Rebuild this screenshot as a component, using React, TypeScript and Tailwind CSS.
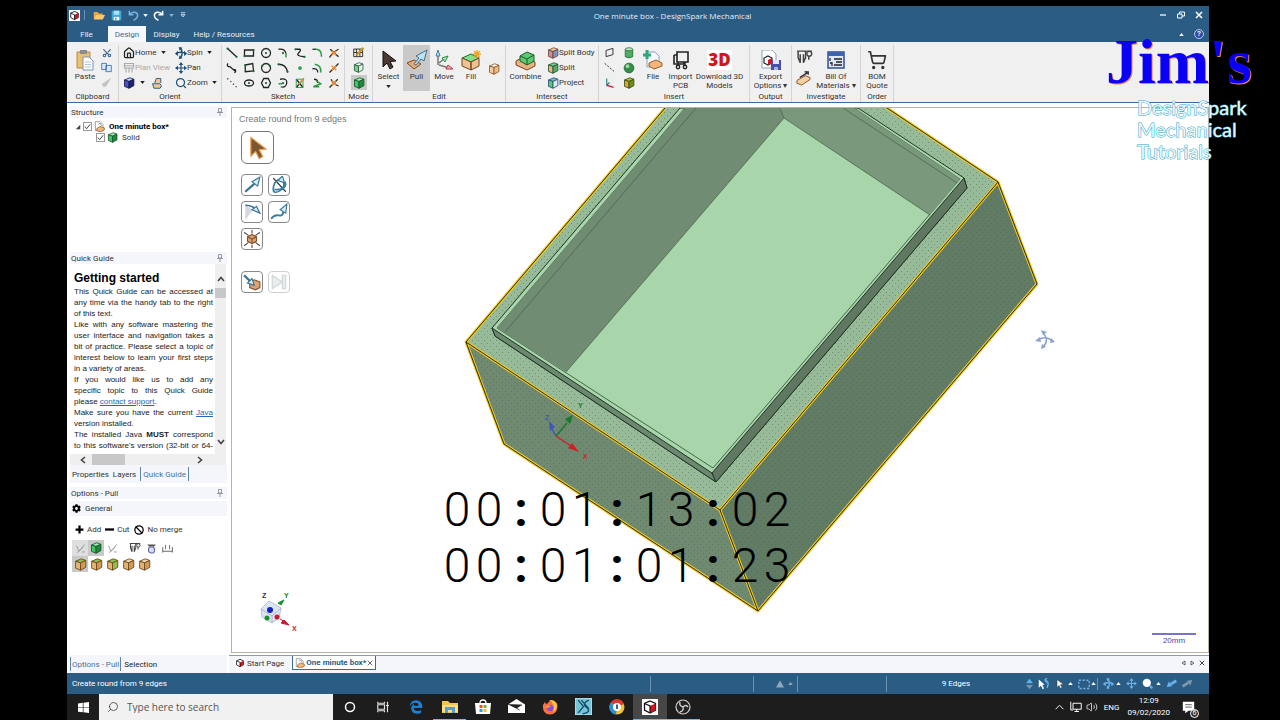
import type { ReactNode } from "react";
import { Search, ShoppingCart, Home, Scissors, Volume2, Ban } from "lucide-react";
import { FaCog, FaEdgeLegacy } from "react-icons/fa";

type IconProps = { w?: number; h?: number; box?: string; children: ReactNode };

function Icon({ w = 12, h, box = "0 0 16 16", children }: IconProps) {
  return (
    <svg width={w} height={h ?? w} viewBox={box} fill="none" className="block shrink-0" aria-hidden="true">
      {children}
    </svg>
  );
}

function Cube({ w = 12, top = "#a4efb0", left = "#45c463", right = "#1f8a3c", line = "#14532a" }) {
  return (
    <Icon w={w}>
      <g stroke={line} strokeWidth="1.1" strokeLinejoin="round">
        <path d="M9 1 14.500 3 8 6 2 4Z" fill={top} />
        <path d="M2 4 8 6V15L2 12.500Z" fill={left} />
        <path d="M14.500 3V11.500L8 15V6Z" fill={right} />
      </g>
    </Icon>
  );
}

function AppLogo({ w = 11 }) {
  return (
    <Icon w={w}>
      <rect width="16" height="16" fill="#fff" />
      <path d="M8 2 13.5 4.5V11L8 14 2.5 11V4.5Z" fill="#fff" stroke="#111" strokeWidth="1.3" />
      <path d="M8 7 13.5 4.5V11L8 14Z" fill="#d3141c" />
      <path d="M2.5 4.5 8 7V14" stroke="#111" strokeWidth="1.2" />
    </Icon>
  );
}

function Caret({ up = false, className = "text-[#222]" }) {
  return (
    <svg width="5" height="3" viewBox="0 0 6 4" className={`shrink-0 ${className}`} aria-hidden="true">
      <path d={up ? "M0 4 3 0 6 4Z" : "M0 0 3 4 6 0Z"} fill="currentColor" />
    </svg>
  );
}

function Pin() {
  return (
    <button aria-label="Pin panel" className="ml-auto mr-1">
      <Icon w={6} h={8} box="0 0 6 8">
        <path d="M1.5 .5h3v3.5h-3zM0 4.5h6M3 4.5V8" stroke="#8a90a0" strokeWidth=".9" />
      </Icon>
    </button>
  );
}

function Group({ label, className, children }: { label: string; className: string; children: ReactNode }) {
  return (
    <section className={`flex shrink-0 flex-col border-r border-[#d4d4d4] ${className}`}>
      <div className="flex h-[47px] items-start">{children}</div>
      <h2 className="text-center leading-[10px]">{label}</h2>
    </section>
  );
}

function BigButton({ label, active, caret, className = "", children }: { label: string; active?: boolean; caret?: boolean; className?: string; children: ReactNode }) {
  return (
    <button className={`flex h-[46px] shrink-0 flex-col items-center pt-[3px] ${active ? "bg-[#c9c9c9]" : ""} ${className}`}>
      <span className="flex h-6 items-center">{children}</span>
      <span className="whitespace-pre-line leading-[9px]">{label}</span>
      {caret && <span className="pt-1"><Caret /></span>}
    </button>
  );
}

function SmallButton({ label, caret, muted, children }: { label: string; caret?: boolean; muted?: boolean; children: ReactNode }) {
  return (
    <button className={`flex h-[15px] items-center whitespace-nowrap ${muted ? "text-[#aaa]" : ""}`}>
      {children}
      {label}
      {caret && <span className="pl-1"><Caret /></span>}
    </button>
  );
}

const sketchTools: { name: string; d: string; dots?: [number, number][]; accent?: string }[] = [
  { name: "Line", d: "M2 2 14 13", dots: [[2, 2], [14, 13]] },
  { name: "Rectangle", d: "M2 4H14V12H2Z", dots: [[2, 12], [14, 4]] },
  { name: "Circle", d: "M8 2a6 6 0 1 0 .1 0", dots: [[8, 8]] },
  { name: "Tangent arc", d: "M2 3Q11 2 12 9", dots: [[8, 8]], accent: "M12 9V14" },
  { name: "Spline", d: "M2 3H8Q10 4 6 8T14 13", dots: [[2, 3], [14, 13]] },
  { name: "Rounded corner", d: "M2 3H7", accent: "M7 3Q14 3 14 13" },
  { name: "Trim away", d: "M2 14Q6 7 14 3M3 3 14 13", accent: "M6 8H10" },
  { name: "Tangent line", d: "M3 2a2 2 0 1 0 2 4L12 12M11 10a2 2 0 1 1 0 4" },
  { name: "Three-point rectangle", d: "M3 4 13 2 14 12 3 13Z", dots: [[3, 4], [14, 12]] },
  { name: "Three-point circle", d: "M8 2a6 6 0 1 0 .1 0", dots: [[3, 5], [13, 5]] },
  { name: "Three-point arc", d: "M2 3Q12 3 14 13", dots: [[2, 3], [14, 13]] },
  { name: "Point", d: "M8 8h.1", accent: "M6.500 8a1.500 1.500 0 1 0 3 0a1.500 1.500 0 1 0-3 0" },
  { name: "Offset curve", d: "M2 9Q9 8 9 14", accent: "M5 3Q14 4 13 14" },
  { name: "Split curve", d: "M2 14 14 2", dots: [[8, 8]] },
  { name: "Construction line", d: "M2 2l1 1M6 5.500l1 1M9.500 9l1 1M13 12.500l1 1" },
  { name: "Ellipse", d: "M2 8a6 4 0 1 0 12 0a6 4 0 1 0-12 0", dots: [[8, 8]] },
  { name: "Polygon", d: "M5 2h6l3 6-3 6H5L2 8Z", dots: [[8, 8]] },
  { name: "Sweep arc", d: "M4 3Q14 1 13 8T5 13", dots: [[8, 8]], accent: "M2 9H7" },
  { name: "Face curve", d: "M3 14 13 2M3 3 12 14", accent: "M3 3H12V14H3Z" },
  { name: "Project to sketch", d: "M4 3Q9 3 9 8", accent: "M3 13 13 9 7 5M3 13h8" },
  { name: "Bend", d: "M2 14 13 3M4 3Q7 9 14 12" },
];

function SketchGrid() {
  return (
    <div className="grid grid-cols-7 pl-px">
      {sketchTools.map((tool, i) => (
        <button key={tool.name} aria-label={tool.name} className="flex h-[15px] w-[17px] items-center justify-center">
          <Icon w={12}>
            <path d={tool.d} stroke={i % 7 === 6 ? "#30231a" : "#222"} strokeWidth="1.700" />
            {tool.accent && <path d={tool.accent} stroke={i === 6 ? "#e06a1c" : "#2b9a45"} strokeWidth={i === 18 ? 1.2 : 2} />}
            {tool.dots?.map(([x, y]) => <circle key={`${x}-${y}`} cx={x} cy={y} r="1.500" fill="#176c32" />)}
            {i % 7 === 6 && <path d="M5 5 11 11M11 5 5 11" stroke="#f08a2a" strokeWidth="1.800" />}
            {i === 18 && <path d="M13 2 6 10" stroke="#d1a33a" strokeWidth="2" />}
          </Icon>
        </button>
      ))}
    </div>
  );
}

function SpinGlyph({ w = 12, color = "#1f5077" }) {
  return (
    <Icon w={w}>
      <path d="M1 9Q8 5 15 9M7 1Q12 8 7 15" stroke={color} strokeWidth="2" />
      <path d="M0 9 4 5V12ZM16 9 12 5V12ZM5 0 10 1 6 5ZM5 16 10 15 6 11Z" fill={color} />
    </Icon>
  );
}

function PanGlyph({ w = 12, color = "#1f5077" }) {
  return (
    <Icon w={w}>
      <path d="M8 2V14M2 8H14" stroke={color} strokeWidth="1.600" />
      <path d="M8 0 11 4H5ZM8 16 5 12H11ZM0 8 4 5V11ZM16 8 12 11V5Z" fill={color} />
    </Icon>
  );
}

function Page({ w = 11 }) {
  return (
    <Icon w={w}>
      <path d="M2 1H9L13 5V14H2Z" fill="#fff" stroke="#777" />
      <path d="M4 11 9 8 15 10V13L9 16 4 14Z" fill="#efb77e" stroke="#8a5220" />
      <path d="M6 5 9 3 11 7" stroke="#777" />
    </Icon>
  );
}

function Caliper({ w = 13 }) {
  return (
    <Icon w={w}>
      <path d="M1 2H15M2 2V8L4 13V5M7 5V13L9 8V2" stroke="#444" strokeWidth="1.400" />
      <circle cx="12.500" cy="4.500" r="2.300" fill="#f0f0f0" stroke="#444" strokeWidth="1.300" />
      <path d="M12 7V10" stroke="#444" strokeWidth="1.400" />
    </Icon>
  );
}

function Arrow({ w = 20, fill = "#4b3a33", stroke = "#111" }) {
  return (
    <Icon w={w} h={w} box="0 0 20 20">
      <path d="M4 1 17 11 11 11.500 14 17 11 19 8 13 4 17Z" fill={fill} stroke={stroke} strokeLinejoin="round" />
    </Icon>
  );
}

function TitleBar() {
  return (
    <header className="bg-[#2b5c84] text-[#e4edf5]">
      <div className="flex h-[18px] items-center">
        <div className="flex items-center pl-[2px]">
          <AppLogo />
          <span className="mx-1 h-[10px] w-px bg-[#6d91b0]" />
          <button aria-label="Open" className="ml-1">
            <Icon><path d="M1 4H6L8 6H13V13H1Z" fill="#e7a63f" /><path d="M4 8H16L13 14H1Z" fill="#ffc86f" /></Icon>
          </button>
          <button aria-label="Save" className="ml-[6px]">
            <Icon w={11}><path d="M1 1H15V15H1Z" fill="#39a9dc" /><path d="M4 1H12V7H4Z" fill="#aee1f5" /><path d="M4 10H12V15H4Z" fill="#fff" /><path d="M6 11H8V15H6Z" fill="#39a9dc" /></Icon>
          </button>
          <button aria-label="Undo" className="ml-[6px] flex items-center gap-1">
            <Icon w={11}><path d="M2 1V7H8M2 7C7 1 14 3 14 8Q14 12 8 15" stroke="#75b5e8" strokeWidth="2.200" /></Icon>
            <Caret className="text-white" />
          </button>
          <button aria-label="Redo" className="ml-[5px] flex items-center gap-[5px]">
            <Icon w={11}><path d="M14 1V7H8M14 7C9 1 2 3 2 8Q2 12 8 15" stroke="#fff" strokeWidth="2.200" /></Icon>
            <Caret className="text-[#8fb0cb]" />
          </button>
          <button aria-label="Customise toolbar" className="ml-[6px]"><Icon w={6}><path d="M2 2H14M3 7H13L8 13Z" stroke="#fff" strokeWidth="2" /></Icon></button>
        </div>
        <h1 className="flex-1 text-center font-['Open_Sans',sans-serif] text-[8px]">One minute box - DesignSpark Mechanical</h1>
        <div className="flex items-center justify-end gap-[10px] pr-[6px]">
          <button aria-label="Minimize"><Icon w={8}><path d="M2 8H14" stroke="#fff" strokeWidth="2.500" /></Icon></button>
          <button aria-label="Restore"><Icon w={8}><path d="M1 6H10V14H1ZM5 6V2H15V10H10" stroke="#fff" strokeWidth="2" /></Icon></button>
          <button aria-label="Close"><Icon w={8}><path d="M2 2 14 14M14 2 2 14" stroke="#fff" strokeWidth="3" /></Icon></button>
        </div>
      </div>
      <nav className="flex h-[18px] items-stretch pt-[2px]">
        <button className="w-[41px] pr-[2px]">File</button>
        <button className="w-[38px] bg-[#f6f7fa] text-[#3d6c96]">Design</button>
        <button className="w-[41px]">Display</button>
        <button className="w-[74px]">Help / Resources</button>
        <div className="ml-auto flex items-center gap-[10px] pr-[5px]">
          <Caret up className="text-white" />
          <button aria-label="Help" className="flex size-[10px] items-center justify-center rounded-full border border-[#b8c6ee] bg-[#2e4da8] text-[8px] font-bold leading-none">?</button>
        </div>
      </nav>
    </header>
  );
}

function Ribbon() {
  return (
    <div className="flex h-[61px] overflow-hidden border-b border-[#3e6a9c] bg-[#f0f0f0] pt-[3px] text-[#333]">
      <Group label="Clipboard" className="w-[52px]">
        <BigButton label="Paste" className="ml-[5px] w-[26px]">
          <Icon w={18} h={22} box="0 0 18 22">
            <path d="M1 3H14V19H1Z" fill="#eac073" stroke="#b98a3d" />
            <path d="M4 1H11V5H4Z" fill="#8d8d8d" />
            <path d="M7 8H13L17 12V21H7Z" fill="#fff" stroke="#7995b8" />
            <path d="M9 13H15M9 15.500H15M9 18H15" stroke="#aec3dd" />
          </Icon>
        </BigButton>
        <div className="flex flex-col items-center pl-[3px]">
          <button aria-label="Cut" className="flex h-[15px] items-center"><Scissors size={10} strokeWidth={2.5} className="-rotate-90 text-[#2f5d96]" /></button>
          <button aria-label="Copy" className="flex h-[15px] items-center"><Icon w={11}><path d="M1 2H8V11H1ZM7 5H15V14H7Z" fill="#dce9f8" stroke="#4575ae" strokeWidth="1.300" /></Icon></button>
          <button aria-label="Format painter" className="flex h-[15px] items-center"><Icon w={11}><path d="M15 1 8 13 4 15 1 10Z" fill="#c4c4c4" /></Icon></button>
        </div>
      </Group>
      <Group label="Orient" className="w-[103px]">
        <div className="w-[51px] pl-1">
          <SmallButton label="Home" caret><Home size={12} strokeWidth={2.5} className="text-[#222]" /></SmallButton>
          <SmallButton label="Plan View" muted><Icon><path d="M1 5H15M2 2H14V8H2ZM4 8V14M8 8V14M12 8V14" stroke="#aaa" strokeWidth="1.500" /></Icon></SmallButton>
          <div className="flex h-[15px] items-center gap-[6px]">
            <button aria-label="View orientation" className="flex items-center gap-[5px]"><Cube w={12} top="#cfd4ff" left="#4650c8" right="#1d2370" line="#14184e" /><Caret /></button>
            <button aria-label="Rotate view"><Icon><path d="M2 9H12L14 12 12 15H4ZM5 8 7 2H13V8" fill="#f0c898" stroke="#2f5d86" strokeWidth="1.300" /></Icon></button>
          </div>
        </div>
        <div className="pl-[5px]">
          <SmallButton label="Spin" caret><SpinGlyph /></SmallButton>
          <SmallButton label="Pan"><PanGlyph /></SmallButton>
          <SmallButton label="Zoom" caret><Search size={12} strokeWidth={2.5} className="text-[#1f5077]" /></SmallButton>
        </div>
      </Group>
      <Group label="Sketch" className="w-[123px]"><SketchGrid /></Group>
      <Group label="Mode" className="w-[28px]">
        <div className="flex w-full flex-col items-center">
          <button aria-label="Sketch mode" className="flex h-[15px] items-center"><Icon w={11}><path d="M1 3H14V14H1ZM5 3V14M10 3V14M1 8H14" stroke="#333" strokeWidth="1.400" /><path d="M15 1 5 12" stroke="#c99a1c" strokeWidth="3" /></Icon></button>
          <button aria-label="Section mode" className="flex h-[15px] items-center"><Cube w={11} top="#fff" left="#7ec98b" right="#e6f5e8" /></button>
          <button aria-label="3D mode" className="flex h-[15px] w-4 items-center justify-center bg-[#c9c9c9]"><Cube w={12} /></button>
        </div>
      </Group>
      <Group label="Edit" className="w-[133px]">
        <BigButton label="Select" caret className="ml-px w-[29px]"><Arrow w={20} /></BigButton>
        <BigButton label="Pull" active className="w-[27px]">
          <Icon w={22} box="0 0 22 22">
            <path d="M1 14 8 11 15 15 8 20Z" fill="#e4aa78" stroke="#7e4d25" />
            <path d="M8 15 13 9 10 7 21 1 18 12 15 10 10 16Z" fill="#bfe3f5" stroke="#406f8e" />
          </Icon>
        </BigButton>
        <BigButton label="Move" className="w-[28px]">
          <Icon w={20} box="0 0 20 20">
            <path d="M4 15V5M5 13 11 8M5 15 15 18" stroke="#777" strokeWidth="1.500" />
            <path d="M4 0 6 6H2Z" fill="#bfe3f5" stroke="#397ea5" />
            <path d="M14 6 11 12 8 8Z" fill="#a9e4b3" stroke="#2f8b45" />
            <path d="M19 19 12 19 14 15Z" fill="#f3aab0" stroke="#b33a46" />
          </Icon>
        </BigButton>
        <BigButton label="Fill" className="w-[26px]">
          <Icon w={21} box="0 0 21 21">
            <path d="M1 8 10 4 18 8 10 12Z" fill="#7fe08f" stroke="#236c33" />
            <path d="M1 8 10 12V20L1 16ZM18 8V16L10 20V12Z" fill="#efc291" stroke="#714822" />
            <path d="M16 0V8M12 4H20M13 1 19 7M19 1 13 7" stroke="#f0a51d" strokeWidth="1.400" />
          </Icon>
        </BigButton>
        <button aria-label="Shell" className="ml-1 mt-[18px]"><Cube w={12} top="#fff" left="#f5cba4" right="#f0b988" line="#8a5220" /></button>
      </Group>
      <Group label="Intersect" className="w-[93px]">
        <BigButton label="Combine" className="ml-[2px] w-[35px]">
          <Icon w={21} box="0 0 21 21">
            <path d="M1 11 8 7 20 12V16L12 20 1 15Z" fill="#e8b17e" stroke="#714822" />
            <path d="M5 6 12 2 19 5V11L12 15 5 11Z" fill="#5fc873" stroke="#195f2b" />
            <path d="M5 6 12 9 19 5M12 9V15" stroke="#195f2b" />
          </Icon>
        </BigButton>
        <div className="pl-[4px]">
          <SmallButton label="Split Body"><Cube w={12} top="#f3d3b2" left="#c98fa0" right="#7e96c4" line="#71422d" /></SmallButton>
          <SmallButton label="Split"><Cube w={12} top="#74d285" left="#eab57f" right="#5aa870" line="#234f2f" /></SmallButton>
          <SmallButton label="Project"><Cube w={12} top="#7ab6dd" left="#5fc873" right="#dbeaf5" line="#23506f" /></SmallButton>
        </div>
      </Group>
      <Group label="Insert" className="w-[151px]">
        <div className="grid shrink-0 grid-cols-2">
          <button aria-label="Plane" className="flex h-[15px] w-5 items-center justify-center"><Icon w={11}><path d="M3 5 13 2V11L3 14Z" stroke="#333" strokeWidth="1.400" /></Icon></button>
          <button aria-label="Cylinder" className="flex h-[15px] w-5 items-center justify-center"><Icon w={12}><path d="M3 3V13Q8 16 13 13V3" fill="#4fae62" stroke="#195f2b" /><ellipse cx="8" cy="3" rx="5" ry="2" fill="#bfeac7" stroke="#195f2b" /></Icon></button>
          <button aria-label="Axis" className="flex h-[15px] w-5 items-center justify-center"><Icon w={11}><path d="M1 2 15 14" stroke="#333" strokeWidth="1.400" strokeDasharray="3 2" /></Icon></button>
          <button aria-label="Sphere" className="flex h-[15px] w-5 items-center justify-center"><Icon w={12}><circle cx="8" cy="8" r="6.500" fill="#348e49" stroke="#195f2b" /><circle cx="6" cy="5.500" r="2.500" fill="#9bdaa7" /></Icon></button>
          <button aria-label="Origin" className="flex h-[15px] w-5 items-center justify-center"><Icon w={11}><path d="M4 2V12L8 8" stroke="#2f7b7b" strokeWidth="1.600" /><path d="M4 12 14 15" stroke="#c52a38" strokeWidth="2" /></Icon></button>
          <button aria-label="Shell body" className="flex h-[15px] w-5 items-center justify-center"><Cube w={12} top="#a5c63c" left="#d3a73f" right="#6d8d1d" line="#3c4a10" /></button>
        </div>
        <BigButton label="File" className="w-[28px]">
          <Icon w={20} box="0 0 20 20">
            <path d="M4 2H12L16 6V17H4Z" fill="#f6f9fd" stroke="#8ca1bb" />
            <path d="M4 0V9M0 5H8" stroke="#2ba878" strokeWidth="3" />
            <path d="M6 13 13 10 19 13V16L11 19 6 16Z" fill="#f2b67c" stroke="#9c5b26" />
          </Icon>
        </BigButton>
        <BigButton label={"Import\nPCB"} className="w-[27px]">
          <Icon w={18} h={20} box="0 0 18 20">
            <path d="M5 2H16V12H5ZM2 5H5M2 5V14H12V12" stroke="#222" strokeWidth="1.600" />
            <path d="M6 12V15M13 12V15" stroke="#222" strokeWidth="1.400" /><circle cx="6" cy="17" r="1.700" stroke="#222" strokeWidth="1.400" /><circle cx="13" cy="17" r="1.700" stroke="#222" strokeWidth="1.400" />
          </Icon>
        </BigButton>
        <BigButton label={"Download 3D\nModels"} className="w-[51px]">
          <span className="bg-white px-px font-['Open_Sans',sans-serif] text-[17px] font-extrabold leading-5 text-[#d3141c]">3D</span>
        </BigButton>
      </Group>
      <Group label="Output" className="w-[42px]">
        <BigButton label={"Export\nOptions ▾"} className="w-full">
          <Icon w={20} box="0 0 20 20">
            <path d="M1 0H11L15 4V18H1Z" fill="#fff" stroke="#8ca1bb" />
            <path d="M7 6 11 8V13L7 15 3 13V8Z" fill="#fff" stroke="#222" strokeWidth="1.200" /><path d="M7 10 11 8V13L7 15Z" fill="#d3141c" />
            <path d="M10 10H20V20H10Z" fill="#4552a8" /><path d="M12 10H18V14H12Z" fill="#dfe4f7" /><path d="M13 17H17V20H13Z" fill="#aab3df" />
          </Icon>
        </BigButton>
      </Group>
      <Group label="Investigate" className="w-[69px]">
        <div className="flex flex-col gap-[5px] pl-1 pt-1">
          <button aria-label="Measure"><Caliper w={17} /></button>
          <button aria-label="Mass properties"><Icon w={15}><path d="M1 10 10 5 15 7V9L6 15 1 13Z" fill="#f3cfa6" stroke="#8a5220" /><path d="M4 7 12 2M9 1H13V4" stroke="#222" strokeWidth="1.400" /></Icon></button>
        </div>
        <BigButton label={"Bill Of\nMaterials ▾"} className="w-[46px]">
          <Icon w={18} box="0 0 18 18">
            <path d="M1 1H17V17H1Z" fill="#dfe7f6" stroke="#2f5094" strokeWidth="1.500" /><path d="M1 1H17V5H1Z" fill="#3d62ae" />
            <path d="M7 8H15M9 11H15M7 14H15M3 7V10M3 12H5V15" stroke="#222" strokeWidth="1.300" />
          </Icon>
        </BigButton>
      </Group>
      <Group label="Order" className="w-[33px]">
        <BigButton label={"BOM\nQuote"} className="w-full"><ShoppingCart size={20} strokeWidth={2} className="text-[#333]" /></BigButton>
      </Group>
    </div>
  );
}

function PanelHeader({ title }: { title: string }) {
  return (
    <div className="flex h-3 shrink-0 items-center bg-[#f4f6fb] pl-px">
      <h2>{title}</h2>
      <Pin />
    </div>
  );
}

function TreeCheck({ label, bold }: { label: string; bold?: boolean }) {
  return (
    <label className="flex items-center gap-[2px]">
      <span className="relative flex">
        <input type="checkbox" defaultChecked className="size-[9px] appearance-none border border-[#999] bg-white" />
        <svg viewBox="0 0 10 10" className="pointer-events-none absolute inset-0 size-[9px]" fill="none"><path d="M2 5 4 7.500 8 2.500" stroke="#444" strokeWidth="1.100" /></svg>
      </span>
      {bold ? <Page /> : <Cube w={11} />}
      <span className={bold ? "pl-[2px] font-bold text-black" : "pl-[2px]"}>{label}</span>
    </label>
  );
}

function Sidebar() {
  return (
    <aside className="flex w-[160px] shrink-0 flex-col bg-white pl-[3px]">
      <section className="flex h-[149px] shrink-0 flex-col pt-[3px]">
        <PanelHeader title="Structure" />
        <div className="flex items-center gap-[2px] pl-[5px] pt-[3px]">
          <Icon w={6}><path d="M14 2V14H2Z" fill="#444" /></Icon>
          <TreeCheck label="One minute box*" bold />
        </div>
        <div className="pl-[26px]"><TreeCheck label="Solid" /></div>
      </section>
      <section className="flex shrink-0 flex-col">
        <PanelHeader title="Quick Guide" />
        <div className="flex h-[190px]">
          <div className="min-w-0 flex-1 overflow-hidden pl-1 pr-[2px] pt-[7px] text-justify font-['Liberation_Sans',Arial,sans-serif] text-[8px] leading-[11px] text-[#222]">
            <h3 className="text-left text-[12px] font-bold leading-[15px] text-black">Getting started</h3>
            <p>This Quick Guide can be accessed at any time via the handy tab to the right of this text.</p>
            <p>Like with any software mastering the user interface and navigation takes a bit of practice. Please select a topic of interest below to learn your first steps in a variety of areas.</p>
            <p className="[text-align-last:justify]">If you would like us to add any<br />specific topic to this Quick Guide</p>
            <p>please <a href="#support" className="text-[#1f67b8] underline">contact support</a>.</p>
            <p>Make sure you have the current <a href="#java" className="text-[#1f67b8] underline">Java</a> version installed.</p>
            <p>The installed Java <b>MUST</b> correspond to this software's version (32-bit or 64-bit) or functions of third-party software will not work.</p>
          </div>
          <div className="mr-[1px] flex w-[11px] flex-col items-center bg-[#efefef] pb-[9px] pt-3">
            <Icon w={8} h={6} box="0 0 8 6"><path d="M1 5 4 1.500 7 5" stroke="#444" strokeWidth="1.600" /></Icon>
            <span className="mt-[6px] h-[10px] w-full bg-[#c8c8c8]" />
            <span className="flex-1" />
            <Icon w={8} h={6} box="0 0 8 6"><path d="M1 1 4 4.500 7 1" stroke="#444" strokeWidth="1.600" /></Icon>
          </div>
        </div>
        <div className="mr-[1px] flex h-[11px] items-center bg-[#efefef] pl-[10px]">
          <Icon w={6} h={8} box="0 0 6 8"><path d="M5 1 1.500 4 5 7" stroke="#444" strokeWidth="1.600" /></Icon>
          <span className="ml-[6px] h-full w-[33px] bg-[#c8c8c8]" />
          <span className="w-[72px]" />
          <Icon w={6} h={8} box="0 0 6 8"><path d="M1 1 4.500 4 1 7" stroke="#444" strokeWidth="1.600" /></Icon>
        </div>
        <nav className="flex h-[18px] items-center gap-1 bg-[#f4f6fb] pl-[2px]">
          <button>Properties</button>
          <button>Layers</button>
          <button className="h-[14px] border-x border-[#5d86ab] px-[2px] text-[#4b7397]">Quick Guide</button>
        </nav>
      </section>
      <section className="flex flex-1 flex-col pt-1">
        <PanelHeader title="Options - Pull" />
        <div className="mt-[2px] flex h-[15px] items-center gap-1 bg-[#f4f6fb] pl-[2px]">
          <FaCog size={9} className="text-black" />
          General
        </div>
        <div className="flex h-[22px] items-center gap-1 pl-[5px] pt-[5px]">
          <button className="flex items-center gap-[3px]"><Icon w={9}><path d="M8 1V15M1 8H15" stroke="#000" strokeWidth="4" /></Icon>Add</button>
          <button className="flex items-center gap-[3px]"><Icon w={9}><path d="M0 8H16" stroke="#000" strokeWidth="4" /></Icon>Cut</button>
          <button className="ml-px flex items-center gap-[3px]"><Ban size={10} strokeWidth={3} className="text-black" />No merge</button>
        </div>
        <div className="mt-[2px] flex h-4 items-center pl-[2px]">
          {["Blend", "Add material", "Measure edge"].map((name, i) => (
            <button key={name} aria-label={name} className={`flex size-4 items-center justify-center ${i === 1 ? "bg-[#c9c9c9]" : i === 0 ? "bg-[#dedede]" : ""}`}>
              {i === 1 ? <Cube w={12} /> : <Icon w={11}><path d="M2 4 6 12 14 2M3 14 12 6M10 13H14" stroke="#999" strokeWidth="1.400" /></Icon>}
            </button>
          ))}
          <button aria-label="Ruler" className="ml-[9px]"><Caliper w={12} /></button>
          <button aria-label="Preserve" className="ml-[5px]"><Icon w={11}><path d="M2 2H14L12 5H4Z" fill="#555" /><circle cx="8" cy="10" r="4.500" fill="#d5dcf3" stroke="#5a63a3" strokeWidth="1.500" /></Icon></button>
          <button aria-label="Dimension" className="ml-[5px]"><Icon w={11}><path d="M1 6V14M15 6V14M1 12H15M5 3V9M11 3V9" stroke="#666" strokeWidth="1.400" /></Icon></button>
        </div>
        <div className="flex h-4 items-center pl-[2px]">
          {["Round", "Chamfer", "Extrude edge", "Copy edge", "Pivot edge"].map((name, i) => (
            <button key={name} aria-label={name} className={`flex size-4 items-center justify-center ${i === 0 ? "bg-[#c9c9c9]" : ""}`}>
              <Cube w={13} top={i < 3 ? "#8fc04c" : "#f5d6ab"} left="#e6b374" right={i === 2 ? "#8fc04c" : "#cf9a57"} line="#6d4a1c" />
            </button>
          ))}
        </div>
      </section>
      <nav className="flex h-[18px] items-center gap-px bg-[#f4f6fb]">
        <button className="h-[14px] border-x border-[#5d86ab] px-px text-[#4b7397]">Options - Pull</button>
        <button className="px-[2px] text-[#222]">Selection</button>
      </nav>
    </aside>
  );
}

const outline = "M466 342 665 108H887L998 182 1037 284 758 611 504 444Z";
const edges = "M665 108 466 342 504 444 758 611 1037 284 998 182 887 108M466 342 720 510 998 182M720 510 758 611";

function Model() {
  return (
    <svg viewBox="232 108 976 544" className="absolute inset-0 size-full" fill="none" role="img" aria-label="Open box model">
      <defs>
        <pattern id="dots" width="6" height="6" patternUnits="userSpaceOnUse">
          <path d="M1 1h1v1h-1zM4 4h1v1h-1z" fill="#3d6048" fillOpacity=".45" />
        </pattern>
      </defs>
      <path d="M466 342 665 108H887L998 182 720 510Z" fill="#97bb99" />
      <path d="M466 342 720 510 758 611 504 444Z" fill="#6f8a71" />
      <path d="M998 182 1037 284 758 611 720 510Z" fill="#627b64" />
      <path d={outline} fill="url(#dots)" />
      <path d="M492 328 680 108H858L964 178 967 188 716 482 495 336Z" fill="#a9d5ab" stroke="#1e3524" />
      <path d="M492 328 712 473 716 482 495 336Z" fill="#6c8870" stroke="#1e3524" />
      <path d="M712 473 964 178 967 188 716 482Z" fill="#607862" stroke="#1e3524" />
      <path d="M497 328 685 108H854L960 179 713 468Z" fill="#a9d5ab" stroke="#46684b" />
      <path d="M497 328 685 108H780L784 118 566 372Z" fill="#708c73" />
      <path d="M780 108 784 118 930 215 960 179 854 108Z" fill="#7a987b" />
      <path d="M566 372 784 118 930 215M780 108 784 118M505 332 696 108M843 108 957 183" stroke="#49674d" strokeWidth=".8" />
      <path d={edges} stroke="#efc92a" strokeWidth="3" strokeLinejoin="round" />
      <path d={edges} stroke="#2c2a08" />
      <g strokeWidth="1.500" fontFamily="Liberation Sans" fontSize="7" fontWeight="bold">
        <path d="M556 436 567 423" stroke="#187a2a" /><path d="M573 415 570 424 565 419Z" fill="#187a2a" />
        <path d="M556 436 552 429" stroke="#3e57b5" /><path d="M549 421 555 427 550 431Z" fill="#3e57b5" />
        <path d="M556 436 571 446" stroke="#d01f25" /><path d="M579 452 568 448 572 443Z" fill="#d01f25" />
        <text x="578" y="408" fill="#187a2a">Y</text>
        <text x="545" y="420" fill="#3e57b5">Z</text>
        <text x="583" y="459" fill="#d01f25">X</text>
      </g>
      <path d="M1038 340Q1045 335 1053 341M1043 333Q1050 340 1043 347" stroke="#8aa3cb" strokeWidth="1.600" />
      <path d="M1035 341 1040 337 1041 342ZM1055 342 1050 343 1051 338ZM1041 330 1047 332 1043 335ZM1041 349 1046 347 1042 344Z" fill="#8aa3cb" />
      <path d="M269 601 281 608 279 618 272 623 262 617 261 609Z" fill="#dde5f1" stroke="#b5c0d4" />
      <path d="M261 609 272 616 281 608M272 616V623" stroke="#aab7cf" />
      <circle cx="270" cy="610" r="3" fill="#1221c4" />
      <circle cx="267" cy="618" r="2.500" fill="#17912c" />
      <circle cx="277" cy="617" r="2.500" fill="#d0192e" />
      <path d="M284 600 281 605 278 603Z" stroke="#17912c" fill="#17912c" />
      <path d="M280 619 285 622" stroke="#d0192e" />
      <path d="M289 625 281 623 284 620Z" fill="#d0192e" stroke="#d0192e" />
      <g fontFamily="Liberation Sans" fontSize="7" fontWeight="bold">
        <text x="262" y="598" fill="#1a23b8">Z</text>
        <text x="284" y="598" fill="#17812c">Y</text>
        <text x="292" y="631" fill="#d0192e">X</text>
      </g>
      <path d="M1152 634H1196" stroke="#4b44b4" strokeWidth="1.500" />
      <text x="1174" y="643" textAnchor="middle" fontFamily="Liberation Sans" fontSize="8" fill="#4b44b4">20mm</text>
    </svg>
  );
}

const toolButton = "flex size-[22px] items-center justify-center rounded border border-[#888] bg-white";

function Viewport() {
  return (
    <main className="relative min-h-0 flex-1 overflow-hidden border border-[#b5b5a5] bg-white">
      <Model />
      <div className="relative flex flex-col items-start pl-[7px] pt-[5px]">
        <p className="font-['Liberation_Sans',Arial,sans-serif] text-[9px] leading-3 text-[#777]">Create round from 9 edges</p>
        <div className="pl-[2px] pt-[6px]">
          <button aria-label="Select tool" className="flex size-[33px] items-center justify-center rounded-md border border-[#777] bg-white"><Arrow w={24} fill="#7d5630" stroke="#e9a45b" /></button>
          <div className="mt-[10px] grid w-[49px] grid-cols-2 gap-[5px]">
            <button aria-label="Pull direction" className={toolButton}><Icon w={18}><path d="M2 14 10 7" stroke="#3a7391" strokeWidth="2" /><path d="M15 1 13 9 8 5Z" fill="#d3eef8" stroke="#3a7391" /></Icon></button>
            <button aria-label="Revolve" className={toolButton}><Icon w={18}><path d="M3 2 14 14" stroke="#333" /><path d="M10 3Q4 3 3 10T9 13 13 5M4 12Q14 13 12 5" stroke="#3a7f9f" strokeWidth="1.500" /><path d="M11 0 13 6 7 4Z" fill="#d3eef8" stroke="#3a7391" /></Icon></button>
            <button aria-label="Draft" className={toolButton}><Icon w={18}><path d="M2 2V15L9 6Z" fill="#d5d8e0" /><path d="M2 2Q8 2 12 6" stroke="#3a7391" strokeWidth="1.500" /><path d="M15 9 8 6 12 3Z" fill="#d3eef8" stroke="#3a7391" /></Icon></button>
            <button aria-label="Sweep" className={toolButton}><Icon w={18}><path d="M1 14Q4 10 8 11T12 6" stroke="#3a7f9f" strokeWidth="1.800" /><path d="M15 1 14 9 9 6Z" fill="#d3eef8" stroke="#3a7391" /></Icon></button>
            <button aria-label="Scale body" className={toolButton}><Icon w={18}><path d="M1 2 5 5M15 2 11 5M1 14 5 11M15 14 11 11M8 0V3M8 13V16" stroke="#555" /><path d="M8 4 12 6V10L8 12 4 10V6Z" fill="#dda373" stroke="#87532b" /><path d="M4 6 8 8 12 6M8 8V12" stroke="#87532b" /></Icon></button>
          </div>
          <div className="mt-[21px] flex gap-[5px]">
            <button aria-label="Up to" className={toolButton}><Icon w={18}><path d="M6 8 10 6 15 8V13L11 15 6 13Z" fill="#dda373" stroke="#87532b" /><path d="M1 2 7 8" stroke="#3a7391" strokeWidth="2" /><path d="M10 11 4 9 8 5Z" fill="#d3eef8" stroke="#3a7391" /></Icon></button>
            <button aria-label="Complete" className={`${toolButton} opacity-40`}><Icon w={18}><path d="M2 2 11 8 2 14ZM11 2H14V14H11Z" fill="#c9d3d3" stroke="#8b9a9a" /></Icon></button>
          </div>
        </div>
      </div>
    </main>
  );
}

function DocumentTabs() {
  return (
    <nav className="flex h-[18px] items-start border-t border-[#8f9bb0] bg-[#f4f6fb]">
      <button className="flex h-[14px] items-center gap-[2px] pl-[6px] pr-2"><AppLogo w={10} />Start Page</button>
      <button className="flex h-[14px] items-center gap-px border border-t-0 border-[#3a6b98] bg-white px-[2px] font-bold text-[#2b5c84]"><Page w={10} />One minute box*<Icon w={6}><path d="M2 2 14 14M14 2 2 14" stroke="#333" strokeWidth="2" /></Icon></button>
      <div className="ml-auto flex h-[14px] items-center gap-1 pr-1">
        <button aria-label="Previous tab"><Icon w={5} h={6} box="0 0 5 6"><path d="M4 1 1 3 4 5Z" stroke="#444" strokeWidth=".8" /></Icon></button>
        <button aria-label="Next tab"><Icon w={5} h={6} box="0 0 5 6"><path d="M1 1 4 3 1 5Z" stroke="#444" strokeWidth=".8" /></Icon></button>
        <button aria-label="Close tab"><Icon w={6}><path d="M2 2 14 14M14 2 2 14" stroke="#333" strokeWidth="2.500" /></Icon></button>
      </div>
    </nav>
  );
}

function StatusBar() {
  return (
    <footer className="flex h-[21px] shrink-0 items-center bg-[#2b5c84] pl-[5px] pr-[16px] text-white">
      <p className="flex-1">Create round from 9 edges</p>
      <div className="flex h-4 items-center">
        <span className="h-full w-[103px] border-l border-[#6d91b0]" />
        <span className="flex h-full w-[44px] items-center justify-center gap-1 border-l border-[#6d91b0] pl-[18px]"><Icon w={8}><path d="M8 1 16 15H0Z" fill="#92a9bb" /></Icon><Caret up className="text-[#92a9bb]" /></span>
        <span className="h-full w-[90px] border-x border-[#6d91b0]" />
        <span className="w-[138px] text-center">9 Edges</span>
      </div>
      <div className="flex w-[168px] items-center justify-end gap-[5px]">
        <Icon w={7} h={12} box="0 0 8 12"><path d="M4 0 8 5H0Z" fill="#5faee8" /><path d="M4 12 0 7H8Z" fill="#7a95aa" /></Icon>
        <Icon w={12}><path d="M1 2V13L4 10 6 15 8 14 6 9H9Z" fill="#fff" /><path d="M9 3Q16 4 12 13M9 3 12 0M9 3 12 6" stroke="#69b2ec" strokeWidth="2" /></Icon>
        <span className="flex items-center gap-[3px]"><Arrow w={10} fill="#fff" stroke="#333" /><Caret up className="text-white" /></span>
        <span className="flex items-center gap-px border-r border-[#6d91b0] pr-px"><Icon w={12}><path d="M1 3H15V14H1Z" stroke="#69b2ec" strokeWidth="1.800" strokeDasharray="3 2" /></Icon><Caret up className="text-white" /></span>
        <span className="flex items-center gap-[2px]"><SpinGlyph w={11} color="#69b2ec" /><Caret up className="text-white" /></span>
        <PanGlyph w={11} color="#69b2ec" />
        <span className="flex items-center gap-[3px]"><Icon w={11}><circle cx="7" cy="7" r="6" fill="#fff" /><path d="M11 11 15 15" stroke="#69b2ec" strokeWidth="3" /></Icon><Caret up className="text-white" /></span>
        <Icon w={11}><path d="M15 4 7 9" stroke="#69b2ec" strokeWidth="4" /><path d="M1 13 4 5 9 12Z" fill="#69b2ec" /></Icon>
        <Icon w={11}><path d="M1 12 9 7" stroke="#7f98ab" strokeWidth="4" /><path d="M15 3 12 11 7 4Z" fill="#7f98ab" /></Icon>
      </div>
    </footer>
  );
}

const taskbarApps: { name: string; icon: ReactNode; open?: boolean; active?: boolean }[] = [
  { name: "Cortana", icon: <Icon w={12}><circle cx="8" cy="8" r="6" stroke="#fff" strokeWidth="2" /></Icon> },
  { name: "Task view", icon: <Icon w={12}><path d="M1 1V3H10V1M1 15V13H10V15M1 5H10V11H1ZM14 1V15M12 6H16" stroke="#e5e5e5" strokeWidth="1.500" /></Icon> },
  { name: "Edge", icon: <FaEdgeLegacy size={14} className="text-[#1b7fd6]" /> },
  { name: "File Explorer", open: true, icon: <Icon w={16}><path d="M0 2H6L8 4H16V14H0Z" fill="#f5c64e" /><path d="M0 6H16V13H0Z" fill="#ffdf85" /><path d="M3 8H13V14H10V11H6V14H3Z" fill="#4aa3df" /></Icon> },
  { name: "Store", icon: <Icon w={16}><path d="M5 4Q5 1 8 1T11 4" stroke="#fff" strokeWidth="1.300" /><path d="M0 4H16L15 15H1Z" fill="#fff" /><path d="M4.500 6H7.500V9H4.500Z" fill="#e8502a" /><path d="M8.500 6H11.500V9H8.500Z" fill="#7ab51d" /><path d="M4.500 10H7.500V13H4.500Z" fill="#2a9fe0" /><path d="M8.500 10H11.500V13H8.500Z" fill="#fbb91a" /></Icon> },
  { name: "Mail", icon: <Icon w={17}><path d="M0 6 8 1 16 6V14H0Z" fill="#fff" /><path d="M0 6 13 6.500 8 9.500 11 11.500" fill="#222" stroke="#222" strokeWidth=".6" /></Icon> },
  { name: "Firefox", icon: <Icon w={16}><path d="M8 1Q12 1 13 5L15 4Q17 15 8 15.500 0 15 1 6L3 3 4 5Q6 5 8 1Z" fill="#ff7139" /><path d="M8 1Q14 1 15 6 15 11 11 13 14 8 8 1Z" fill="#ffc53a" /><circle cx="8" cy="9" r="3.300" fill="#8a4be0" /><path d="M3 8Q5 5 9 7L6 9Z" fill="#ff9a3a" /></Icon> },
  { name: "Studio", icon: <Icon w={17}><path d="M0 0H16V16H0Z" fill="#75c4d8" stroke="#d7eff5" /><path d="M3 2 8 8 3 14M13 2Q6 5 11 9T7 15M6 2 13 10" stroke="#164e63" strokeWidth="1.300" /></Icon> },
  { name: "Chrome", icon: <Icon w={16}><circle cx="8" cy="8" r="7.500" fill="#f6c22c" /><path d="M8 8 1.500 4A7.500 7.500 0 0 1 15 5Z" fill="#e0362c" /><path d="M8 8 1.500 4A7.500 7.500 0 0 0 7 15.500Z" fill="#2b8fd0" /><circle cx="8" cy="8" r="4" fill="#fff" /><path d="M8 5.500V10" stroke="#2d4d80" strokeWidth="1.800" /></Icon> },
  { name: "DesignSpark", active: true, open: true, icon: <AppLogo w={16} /> },
  { name: "OBS", open: true, icon: <Icon w={16}><circle cx="8" cy="8" r="7" fill="#222" stroke="#cfcfcf" strokeWidth="1.200" /><path d="M8 8Q4 7 5 3M8 8Q11 5 13 8M8 8Q9 12 5 13" stroke="#cfcfcf" strokeWidth="1.400" /></Icon> },
];

function Taskbar() {
  return (
    <div className="flex h-[26px] shrink-0 items-stretch bg-[#1d1d1d] font-['Open_Sans',sans-serif] text-white">
      <button aria-label="Start" className="flex w-8 items-center justify-center"><Icon w={11}><path d="M0 2 7 1V7.500H0ZM8 1 16 0V7.500H8ZM0 8.500H7V15L0 14ZM8 8.500H16V16L8 15Z" fill="#fff" /></Icon></button>
      <label className="flex w-[234px] items-center gap-2 bg-[#f1f1f1] pl-2">
        <Search size={12} strokeWidth={1.5} className="-scale-x-100 text-[#333]" />
        <input type="text" aria-label="Search" placeholder="Type here to search" className="min-w-0 flex-1 bg-transparent text-[10px] outline-none placeholder:text-[#555]" />
      </label>
      <div className="grid w-[367px] grid-cols-11">
        {taskbarApps.map((app) => (
          <button key={app.name} aria-label={app.name} className={`flex items-center justify-center border-b ${app.open ? "border-[#76b9ed]" : "border-transparent"} ${app.active ? "bg-[#474747]" : ""}`}>
            {app.icon}
          </button>
        ))}
      </div>
      <div className="ml-auto flex items-center pr-[14px] font-['Roboto',sans-serif] text-[8px]">
        <Icon w={9}><path d="M1 11 8 4 15 11" stroke="#fff" strokeWidth="1.700" /></Icon>
        <span className="ml-[6px]"><Icon w={12}><path d="M4 3H15V11H4ZM9 11V14M6 14H12M1 1V12H4" stroke="#fff" strokeWidth="1.300" /></Icon></span>
        <Volume2 size={12} strokeWidth={1.5} className="ml-1" />
        <span className="ml-[6px]">ENG</span>
        <time className="ml-2 text-center leading-3">12:09<br />09/02/2020</time>
        <span className="relative ml-3">
          <Icon w={13}><path d="M1 1H15V12H8L4 15V12H1Z" fill="#fff" /><path d="M4 4.500H12M4 7.500H12" stroke="#444" /></Icon>
          <span className="absolute -bottom-1 -right-1 flex size-[9px] items-center justify-center rounded-full border border-white bg-[#333] text-[7px] leading-none">6</span>
        </span>
      </div>
    </div>
  );
}

function Timecode({ value }: { value: string }) {
  return (
    <p className="flex">
      {value.split("").map((c, i) => <span key={i} className={`w-8 text-center ${c === ":" ? "font-bold" : ""}`}>{c}</span>)}
    </p>
  );
}

function Overlays() {
  return (
    <>
      <div className="pointer-events-none absolute left-[441px] top-[482px] font-['Roboto',sans-serif] text-[48px] font-light leading-[56px] text-black">
        <Timecode value="00:01:13:02" />
        <Timecode value="00:01:01:23" />
      </div>
      <div className="pointer-events-none absolute right-0 top-7 w-[174px]">
        <p className="font-['Liberation_Serif',serif] text-[64px] font-bold leading-[68px] text-[#0a00f5] [text-shadow:1px_1px_0_#e88b4a]">Jim's</p>
        <p className="pl-[31px] font-['Lato',sans-serif] text-[20px] leading-[22px] text-[#e8f8fd] [-webkit-text-stroke:1px_#2f9fc6] [paint-order:stroke_fill]">DesignSpark<br />Mechanical<br />Tutorials</p>
      </div>
    </>
  );
}

export default function App() {
  return (
    <div className="relative flex h-screen flex-col overflow-hidden bg-black pl-[67px] pr-[71px] pt-[6px] font-['Roboto',sans-serif] text-[8px] leading-[11px] text-[#333]">
      <TitleBar />
      <Ribbon />
      <div className="flex min-h-0 flex-1 bg-[#f4f6fb]">
        <Sidebar />
        <div className="flex min-w-0 flex-1 flex-col bg-white pl-[2px]">
          <div className="flex min-h-0 flex-1 flex-col pb-[2px] pl-[2px] pt-1">
            <Viewport />
          </div>
          <DocumentTabs />
        </div>
      </div>
      <StatusBar />
      <Taskbar />
      <Overlays />
    </div>
  );
}
